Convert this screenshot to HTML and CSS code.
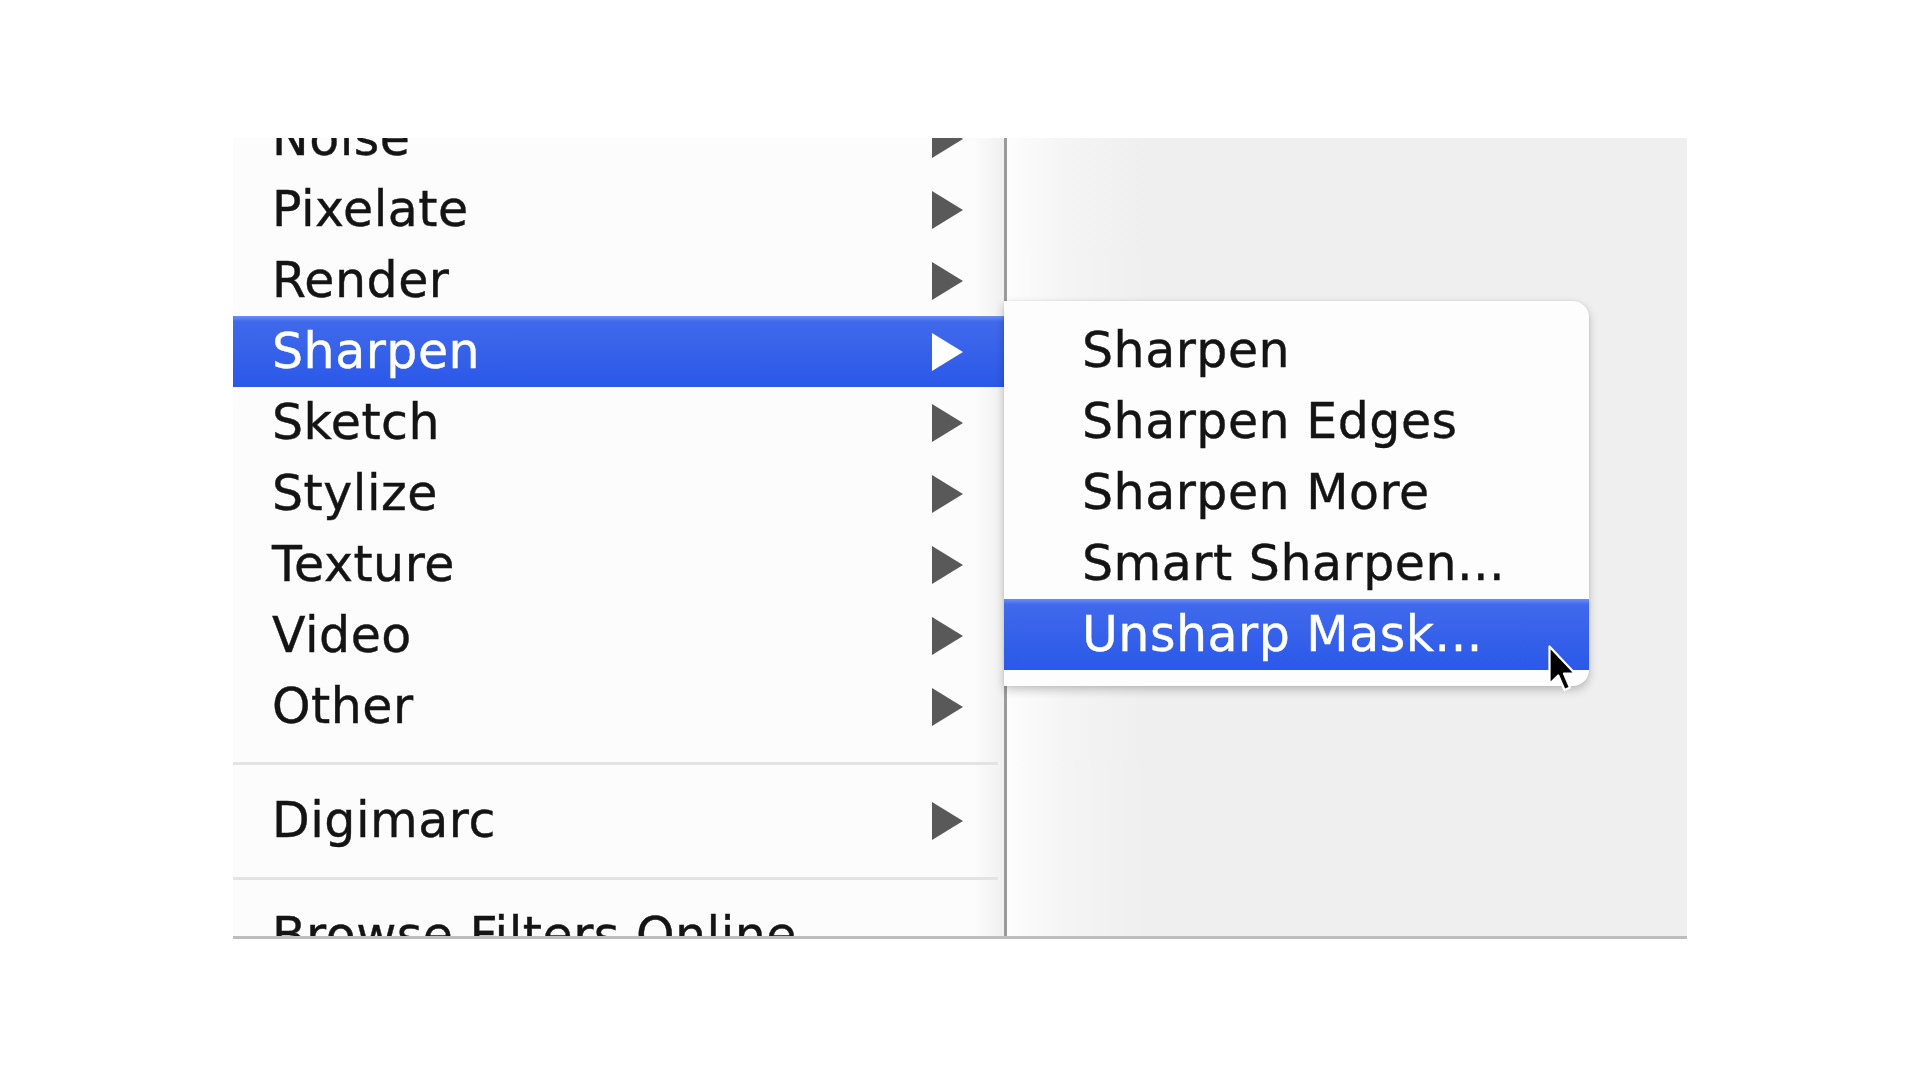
FILE: index.html
```html
<!DOCTYPE html>
<html lang="en">
<head>
    <meta charset="UTF-8">
    <meta name="viewport" content="width=device-width, initial-scale=1.0">
    <title>Filter Menu - Sharpen</title>
    <link rel="stylesheet" href="styles.css">
</head>
<body>
    <div class="screenshot">
        <!-- Main Filter menu, scrolled so Noise is cut at the top -->
        <div class="filter-menu">
            <ul class="menu-list">
                <li class="menu-item has-sub"><span class="item-label">Noise</span><span class="sub-arrow"></span></li>
                <li class="menu-item has-sub"><span class="item-label">Pixelate</span><span class="sub-arrow"></span></li>
                <li class="menu-item has-sub"><span class="item-label">Render</span><span class="sub-arrow"></span></li>
                <li class="menu-item has-sub active"><span class="item-label">Sharpen</span><span class="sub-arrow"></span></li>
                <li class="menu-item has-sub"><span class="item-label">Sketch</span><span class="sub-arrow"></span></li>
                <li class="menu-item has-sub"><span class="item-label">Stylize</span><span class="sub-arrow"></span></li>
                <li class="menu-item has-sub"><span class="item-label">Texture</span><span class="sub-arrow"></span></li>
                <li class="menu-item has-sub"><span class="item-label">Video</span><span class="sub-arrow"></span></li>
                <li class="menu-item has-sub"><span class="item-label">Other</span><span class="sub-arrow"></span></li>
                <li class="menu-separator"></li>
                <li class="menu-item has-sub"><span class="item-label">Digimarc</span><span class="sub-arrow"></span></li>
                <li class="menu-separator second"></li>
                <li class="menu-item"><span class="item-label">Browse Filters Online...</span></li>
            </ul>
        </div>

        <div class="menu-divider"></div>

        <div class="backdrop"></div>

        <!-- Sharpen submenu -->
        <ul class="submenu">
            <li class="submenu-item">Sharpen</li>
            <li class="submenu-item">Sharpen Edges</li>
            <li class="submenu-item">Sharpen More</li>
            <li class="submenu-item">Smart Sharpen...</li>
            <li class="submenu-item active">Unsharp Mask...</li>
        </ul>

        <svg class="cursor" width="30" height="50" viewBox="0 0 12 20">
            <path d="M1 1 L1 16 L4.5 12.6 L7 18.4 L9.2 17.4 L6.8 11.8 L11.2 11.8 Z" fill="#000" stroke="#fff" stroke-width="0.9" stroke-linejoin="round"/>
        </svg>
    </div>
</body>
</html>
```

FILE: styles.css
```css
:root {
    --menu-bg: #fcfcfc;
    --text: #141414;
    --arrow: #595959;
    --divider: #9b9b9b;
    --separator: #e3e3e3;
    --backdrop: #efefef;
    --highlight: linear-gradient(#6a8ff4, #4069ec 8%, #2a58e8);
}

body {
    margin: 0;
    background-color: #ffffff;
    font-family: 'DejaVu Sans', 'Liberation Sans', sans-serif;
}

.screenshot {
    position: relative;
    display: flex;
    width: 1454px;
    height: 798px;
    margin: 138px 0 0 233px;
    border-bottom: 3px solid #bdbdbd;
    overflow: hidden;
}

.filter-menu {
    width: 771px;
    flex-shrink: 0;
    background: linear-gradient(to right, var(--menu-bg) 96%, #f0f0f0);
    overflow: hidden;
}

.menu-list,
.submenu {
    list-style: none;
    margin: 0;
    padding: 0;
}

.menu-list {
    margin-top: -35px;
}

.menu-item,
.submenu-item {
    font-size: 49px;
    letter-spacing: 0.5px;
    -webkit-text-stroke: 0.4px currentColor;
    color: var(--text);
    white-space: nowrap;
}

.menu-item {
    display: flex;
    align-items: center;
    justify-content: space-between;
    height: 71px;
    padding: 0 41px 0 39px;
}

.menu-item.active {
    background: var(--highlight);
    color: #ffffff;
}

.sub-arrow {
    width: 0;
    height: 0;
    border-left: 31px solid var(--arrow);
    border-top: 19px solid transparent;
    border-bottom: 19px solid transparent;
}

.menu-item.active .sub-arrow {
    border-left-color: #ffffff;
}

.menu-separator {
    height: 43px;
    display: flex;
    align-items: center;
}

.menu-separator::before {
    content: "";
    width: 100%;
    height: 3px;
    margin-right: 6px;
    background-color: var(--separator);
}

.menu-separator.second {
    height: 44px;
}

.menu-divider {
    width: 3px;
    flex-shrink: 0;
    background-color: var(--divider);
}

.backdrop {
    flex: 1;
    background: linear-gradient(to right, #fdfdfd, #f4f4f4 60px, var(--backdrop) 140px);
}

.submenu {
    position: absolute;
    left: 771px;
    top: 163px;
    width: 585px;
    padding: 14px 0 16px;
    background-color: #fdfdfd;
    border-radius: 0 16px 16px 0;
    box-shadow: 0 4px 10px rgba(0, 0, 0, 0.22), 0 0 3px rgba(0, 0, 0, 0.08);
}

.submenu-item {
    height: 71px;
    line-height: 71px;
    padding-left: 78px;
}

.submenu-item.active {
    background: var(--highlight);
    color: #ffffff;
}

.cursor {
    position: absolute;
    left: 1314px;
    top: 506px;
}
```
